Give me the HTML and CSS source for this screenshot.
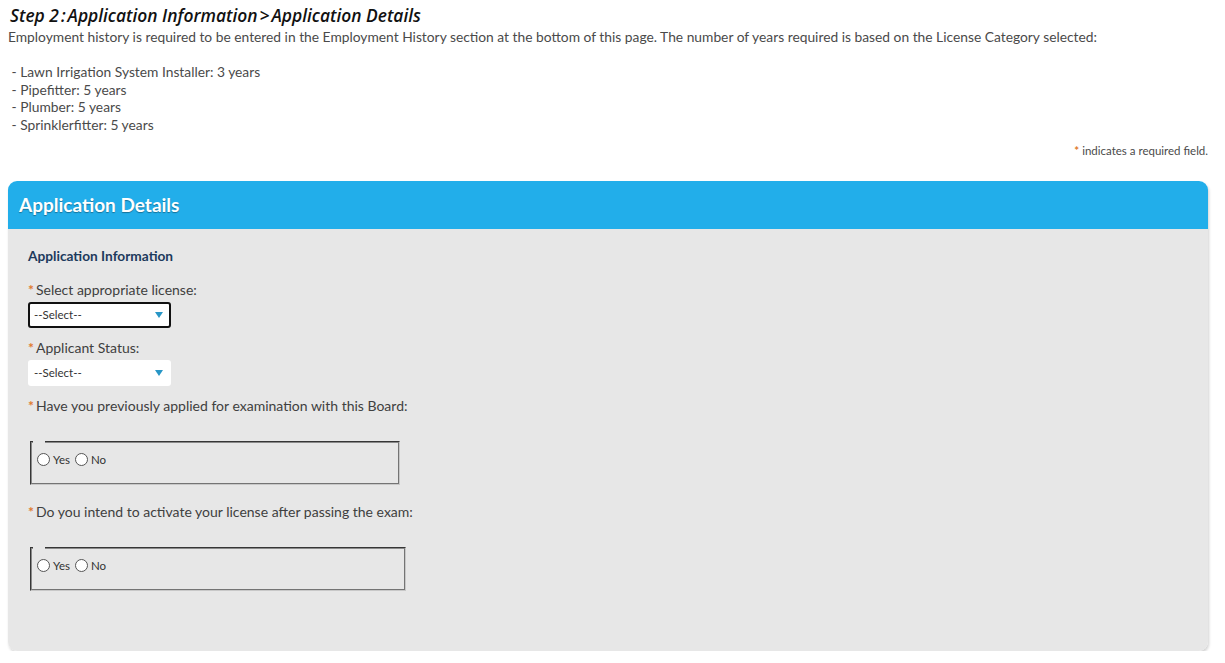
FILE: index.html
```html
<!DOCTYPE html>
<html lang="en">
<head>
<meta charset="utf-8">
<title>Application Details</title>
<link rel="stylesheet" href="styles.css">
</head>
<body>
<h1 class="step-title">Step 2<span class="colon">:</span>Application Information<span class="gt">&gt;</span>Application Details</h1>
<p class="intro">Employment history is required to be entered in the Employment History section at the bottom of this page. The number of years required is based on the License Category selected:<br><br>&nbsp;- Lawn Irrigation System Installer: 3 years<br>&nbsp;- Pipefitter: 5 years<br>&nbsp;- Plumber: 5 years<br>&nbsp;- Sprinklerfitter: 5 years</p>
<p class="req-note"><span class="star">*</span> indicates a required field.</p>

<section class="panel">
  <div class="panel-head"><h2 class="panel-title">Application Details</h2></div>
  <div class="panel-body">
    <h3 class="group-title">Application Information</h3>

    <label class="field-label label-first"><span class="star">*</span>Select appropriate license:</label>
    <div class="select select-focus"><span class="select-text">--Select--</span><span class="caret"></span></div>

    <label class="field-label label-next"><span class="star">*</span>Applicant Status:</label>
    <div class="select"><span class="select-text">--Select--</span><span class="caret"></span></div>

    <label class="field-label label-next"><span class="star">*</span>Have you previously applied for examination with this Board:</label>
    <fieldset class="radio-box box-a">
      <legend class="gap"></legend>
      <div class="radio-row">
        <span class="radio"></span><span class="radio-text">Yes</span>
        <span class="radio"></span><span class="radio-text">No</span>
      </div>
    </fieldset>

    <label class="field-label label-after-box"><span class="star">*</span>Do you intend to activate your license after passing the exam:</label>
    <fieldset class="radio-box box-b">
      <legend class="gap"></legend>
      <div class="radio-row">
        <span class="radio"></span><span class="radio-text">Yes</span>
        <span class="radio"></span><span class="radio-text">No</span>
      </div>
    </fieldset>
  </div>
</section>
</body>
</html>
```

FILE: styles.css
```css
html, body {
  margin: 0;
  background: #ffffff;
}
body {
  padding: 4px 17px 0 8px;
  font-family: "Lato", "Open Sans", "Liberation Sans", sans-serif;
  color: #4a4a4a;
}
.step-title {
  margin: 0;
  font-family: "Open Sans", "Lato", sans-serif;
  font-size: 17.4px;
  line-height: 22px;
  font-style: italic;
  font-weight: 600;
  color: #111111;
  padding-left: 2px;
}
.step-title .colon,
.step-title .gt {
  padding: 0 2px;
}
.intro {
  margin: 2px 0 0 0;
  font-size: 13.8px;
  line-height: 17.6px;
  color: #4a4a4a;
}
.req-note {
  margin: 10px 0 0 0;
  text-align: right;
  font-size: 11.5px;
  line-height: 14px;
  color: #4a4a4a;
}
.star {
  color: #e07a2e;
  font-weight: 700;
  margin-right: 2px;
}
.req-note .star {
  margin-right: 0;
}
.panel {
  margin-top: 23px;
  border-radius: 9px;
  box-shadow: 1px 2px 3px rgba(0,0,0,0.18);
}
.panel-head {
  background: #22aeea;
  height: 48px;
  border-radius: 9px 9px 0 0;
  display: flex;
  align-items: center;
  padding-left: 11px;
}
.panel-title {
  margin: 0;
  font-size: 19px;
  font-weight: 700;
  color: #ffffff;
  text-shadow: 0 1px 1px rgba(0,0,0,0.35);
}
.panel-body {
  background: #e7e7e7;
  border-radius: 0 0 9px 9px;
  padding: 18px 20px 60px 20px;
  display: flex;
  flex-direction: column;
  align-items: flex-start;
}
.group-title {
  margin: 0;
  font-size: 13.7px;
  line-height: 18px;
  font-weight: 700;
  color: #1d3a5c;
}
.field-label {
  display: block;
  font-size: 14px;
  line-height: 18px;
  color: #404040;
}
.label-first { margin-top: 16px; }
.label-next { margin-top: 11px; }
.label-after-box { margin-top: 18px; }
.select {
  margin-top: 3px;
  width: 143px;
  height: 26px;
  box-sizing: border-box;
  background: #ffffff;
  border: 2px solid transparent;
  border-radius: 3px;
  display: flex;
  align-items: center;
  justify-content: space-between;
  padding: 0 6px 0 4px;
}
.select-focus {
  border-color: #111111;
}
.select-text {
  font-size: 11.5px;
  color: #333333;
}
.caret {
  width: 0;
  height: 0;
  border-left: 4px solid transparent;
  border-right: 4px solid transparent;
  border-top: 6px solid #2896c6;
}
.radio-box {
  margin: 26px 0 0 2px;
  padding: 9px 0 15px 1px;
  border: 2px groove #d8d8d8;
  border-color: #8a8a8a #c8c8c8 #c8c8c8 #8a8a8a;
  box-sizing: border-box;
  height: 44px;
}
.box-a { width: 370px; }
.box-b { width: 376px; }
.gap {
  padding: 0 6px;
  height: 0;
}
.radio-row {
  display: flex;
  align-items: center;
  height: 16px;
  padding-left: 4px;
}
.radio {
  width: 13px;
  height: 13px;
  box-sizing: border-box;
  border: 1px solid #555555;
  border-radius: 50%;
  background: #ffffff;
}
.radio-text {
  font-size: 11.5px;
  color: #333333;
  margin: 0 5px 0 3px;
}
```
